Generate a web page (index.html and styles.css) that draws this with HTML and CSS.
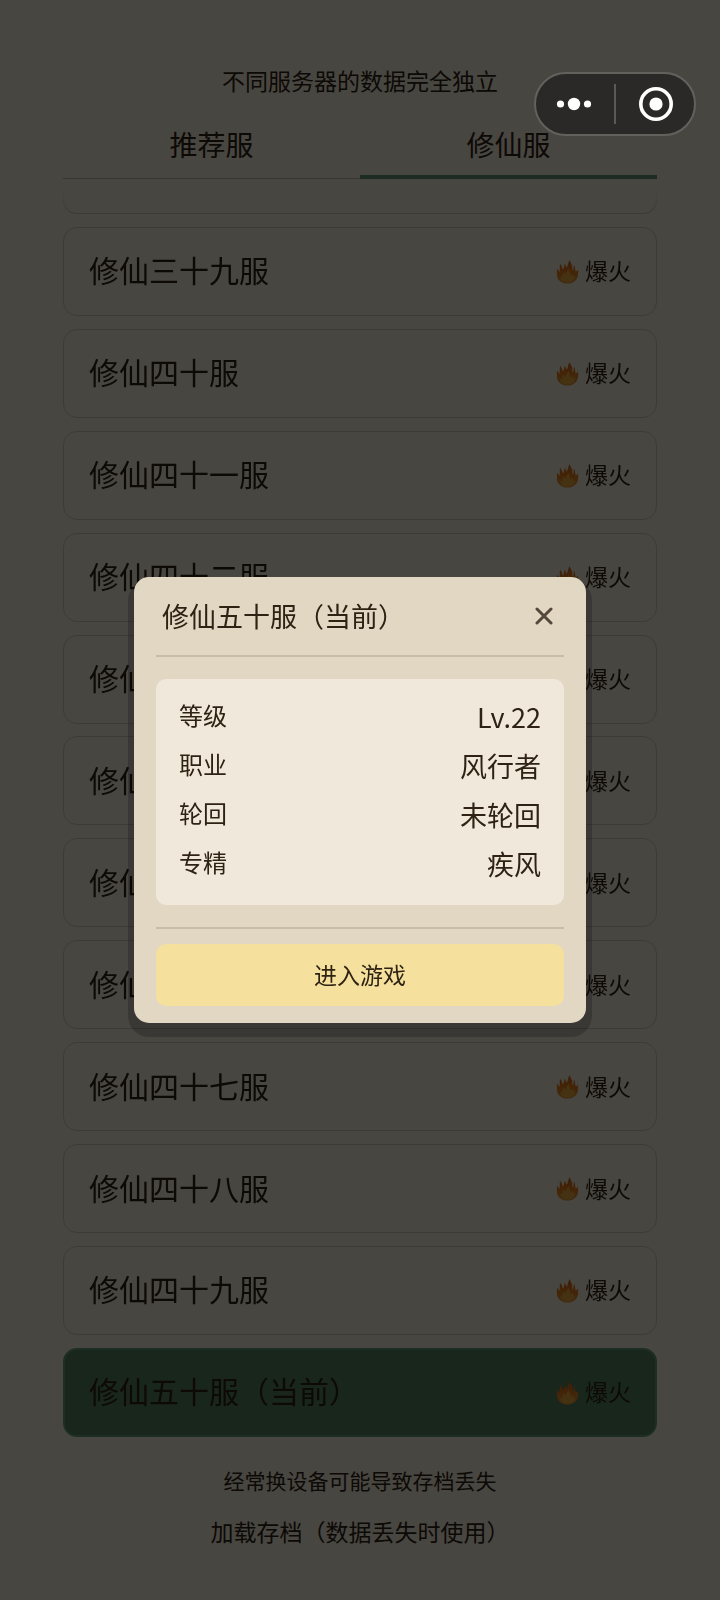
FILE: index.html
```
<!DOCTYPE html>
<html lang="zh-CN">
<head>
    <meta charset="UTF-8">
    <meta name="viewport" content="width=device-width, initial-scale=1.0">
    <title>修仙服</title>
    <link rel="stylesheet" href="styles.css">
</head>
<body>
    <svg width="0" height="0" class="defs" aria-hidden="true">
        <defs>
            <linearGradient id="flame" x1="0" y1="0" x2="0" y2="1">
                <stop offset="0" stop-color="#c8641a"/>
                <stop offset="0.5" stop-color="#e27a18"/>
                <stop offset="1" stop-color="#d8923c"/>
            </linearGradient>
            <symbol id="fire" viewBox="0 0 24 26">
                <path fill="url(#flame)" d="M12 25.500C5.500 25.500 1 21.500 1 16 1 14 1.200 12.500 .8 10.500 2.200 11.300 3 12.300 3.600 13.600 4.400 11.500 3.600 8 4.200 5 5.600 6.500 6.400 8.500 7 11 8.800 9.500 8.400 7 9.200 4.800 9.900 6.200 10.600 7.400 11 9 12.800 7.500 12.200 4 14.200 1 14.600 3.500 16.200 4.500 16.800 7 17.200 8.700 16.600 10.500 17.600 12 18.800 10.500 18 8 18.800 6 20 8 19.800 10.500 20.600 13 21.600 12.400 22.200 11.600 23.200 10.800 22.800 12.600 23.200 14 23 16 22.600 21.500 18.500 25.500 12 25.500Z"/>
                <path fill="#e6a83c" d="M12 24.500C7.500 24.500 4.400 22 4.200 18.400 5.400 19 6 19.200 6.800 19 6.200 17 7 15.200 8.200 13.600 8.600 15 9 15.800 10 16.400 10.600 13.800 11.800 12 13.400 10.400 13.400 13 15 14.600 15.200 17.400 16.400 17 16.800 16 17.200 15 18 16.200 18 17.600 18 18.800 18.800 18.600 19.400 18.200 20 17.600 20 21.800 16.600 24.500 12 24.500Z"/>
            </symbol>
        </defs>
    </svg>

    <main class="page">
        <p class="notice">不同服务器的数据完全独立</p>
        <nav class="tabs">
            <button class="tab">推荐服</button>
            <button class="tab active">修仙服</button>
        </nav>
        <ul class="servers">
            <li class="server partial"></li>
            <li><button class="server"><span>修仙三十九服</span><span class="status"><svg class="fire"><use href="#fire"/></svg>爆火</span></button></li>
            <li><button class="server"><span>修仙四十服</span><span class="status"><svg class="fire"><use href="#fire"/></svg>爆火</span></button></li>
            <li><button class="server"><span>修仙四十一服</span><span class="status"><svg class="fire"><use href="#fire"/></svg>爆火</span></button></li>
            <li><button class="server"><span>修仙四十二服</span><span class="status"><svg class="fire"><use href="#fire"/></svg>爆火</span></button></li>
            <li><button class="server"><span>修仙四十三服</span><span class="status"><svg class="fire"><use href="#fire"/></svg>爆火</span></button></li>
            <li><button class="server"><span>修仙四十四服</span><span class="status"><svg class="fire"><use href="#fire"/></svg>爆火</span></button></li>
            <li><button class="server"><span>修仙四十五服</span><span class="status"><svg class="fire"><use href="#fire"/></svg>爆火</span></button></li>
            <li><button class="server"><span>修仙四十六服</span><span class="status"><svg class="fire"><use href="#fire"/></svg>爆火</span></button></li>
            <li><button class="server"><span>修仙四十七服</span><span class="status"><svg class="fire"><use href="#fire"/></svg>爆火</span></button></li>
            <li><button class="server"><span>修仙四十八服</span><span class="status"><svg class="fire"><use href="#fire"/></svg>爆火</span></button></li>
            <li><button class="server"><span>修仙四十九服</span><span class="status"><svg class="fire"><use href="#fire"/></svg>爆火</span></button></li>
            <li><button class="server current"><span>修仙五十服（当前）</span><span class="status"><svg class="fire"><use href="#fire"/></svg>爆火</span></button></li>
        </ul>
        <footer class="footer">
            <p class="warning">经常换设备可能导致存档丢失</p>
            <a class="load" href="#">加载存档（数据丢失时使用）</a>
        </footer>
    </main>

    <div class="overlay">
        <section class="modal" role="dialog" aria-labelledby="modalTitle">
            <header class="modal-header">
                <h2 id="modalTitle">修仙五十服（当前）</h2>
                <button class="close" aria-label="关闭">
                    <svg width="18" height="18" viewBox="0 0 18 18"><path d="M2 2L16 16M16 2L2 16" stroke="currentColor" stroke-width="3" stroke-linecap="round"/></svg>
                </button>
            </header>
            <dl class="info">
                <div class="row"><dt>等级</dt><dd>Lv.22</dd></div>
                <div class="row"><dt>职业</dt><dd>风行者</dd></div>
                <div class="row"><dt>轮回</dt><dd>未轮回</dd></div>
                <div class="row"><dt>专精</dt><dd>疾风</dd></div>
            </dl>
            <div class="modal-footer">
                <button class="enter">进入游戏</button>
            </div>
        </section>
    </div>

    <!-- mini program capsule -->
    <div class="capsule">
        <button aria-label="更多">
            <svg width="36" height="14" viewBox="0 0 36 14" fill="#fff"><circle cx="4.500" cy="7" r="3.600"/><circle cx="18" cy="7" r="6.200"/><circle cx="31.500" cy="7" r="3.600"/></svg>
        </button>
        <button aria-label="关闭小程序">
            <svg width="34" height="34" viewBox="0 0 34 34"><circle cx="17" cy="17" r="15.200" fill="none" stroke="#fff" stroke-width="3.600"/><circle cx="17" cy="17" r="6.600" fill="#fff"/></svg>
        </button>
    </div>
</body>
</html>
```

FILE: styles.css
```
* {
    box-sizing: border-box;
}
body {
    margin: 0;
    background-color: #f0e9d8;
    color: #2e2214;
    font-family: "Noto Sans CJK SC", sans-serif;
}
button {
    margin: 0;
    padding: 0;
    border: none;
    background: none;
    color: inherit;
    font-family: inherit;
    cursor: pointer;
}
p, ul, dl, dd, h2 {
    margin: 0;
    padding: 0;
}
.defs {
    position: absolute;
}
.page {
    display: flex;
    flex-direction: column;
    min-height: 100vh;
    padding: 65px 63px 54px;
}
.notice {
    margin-bottom: 16px;
    font-size: 23px;
    line-height: 30px;
    text-align: center;
}
.tabs {
    display: flex;
    height: 68px;
    box-shadow: inset 0 -1px #bdb5a4;
}
.tab {
    flex: 1;
    padding-top: 2px;
    font-size: 28px;
    line-height: 62px;
    border-bottom: 4px solid transparent;
}
.tab.active {
    border-bottom-color: #5f9474;
}
.servers {
    flex: 1;
    display: flex;
    flex-direction: column;
    justify-content: space-between;
    margin-top: 13px;
    list-style: none;
    mask-image: linear-gradient(transparent, #000 20px);
}
.server {
    display: flex;
    align-items: center;
    justify-content: space-between;
    width: 100%;
    height: 89px;
    padding: 0 25px 4px 25px;
    border: 1px solid #cdc6b6;
    border-radius: 14px;
    font-size: 30px;
}
.server.partial {
    height: 22px;
    border-top: none;
    border-radius: 0 0 14px 14px;
}
.server.current {
    background-color: #567f5c;
    border: 2px solid #639a78;
    padding: 0 24px 4px 24px;
}
.status {
    display: flex;
    align-items: center;
    gap: 6px;
    padding-top: 2px;
    font-size: 23px;
}
.fire {
    width: 23px;
    height: 25px;
    margin-top: 2px;
}
.footer {
    display: flex;
    flex-direction: column;
    align-items: center;
    gap: 21px;
    padding-top: 28px;
    line-height: 30px;
}
.warning {
    font-size: 21px;
}
.load {
    color: inherit;
    font-size: 23px;
    text-decoration: none;
}
.overlay {
    position: fixed;
    inset: 0;
    display: flex;
    align-items: center;
    padding: 0 134px;
    background-color: rgba(0, 0, 0, 0.7);
}
.modal {
    flex: 1;
    padding: 0 22px 17px;
    background-color: #e1d7c3;
    border-radius: 15px;
    box-shadow: 0 8px 0 6px rgba(0, 0, 0, 0.2);
}
.modal-header {
    display: flex;
    align-items: center;
    justify-content: space-between;
    height: 80px;
    padding: 0 11px 2px 6px;
    border-bottom: 2px solid #c9bda8;
}
h2 {
    font-size: 27px;
    font-weight: normal;
}
.close {
    display: flex;
    padding-top: 2px;
    color: #55483a;
}
.info {
    margin: 22px 0;
    padding: 13px 23px 17px;
    background-color: #f0e9db;
    border-radius: 10px;
}
.row {
    display: flex;
    justify-content: space-between;
    line-height: 49px;
}
dt {
    font-size: 24px;
    line-height: 46px;
}
dd {
    font-size: 27px;
}
.modal-footer {
    padding-top: 15px;
    border-top: 2px solid #c9bda8;
}
.enter {
    width: 100%;
    height: 62px;
    padding-bottom: 2px;
    background-color: #f5e09d;
    border-radius: 10px;
    font-size: 23px;
}
.capsule {
    position: fixed;
    top: 72px;
    right: 24px;
    display: flex;
    align-items: center;
    width: 162px;
    height: 64px;
    background-color: #2b2927;
    border: 2px solid #62615c;
    border-radius: 32px;
}
.capsule button {
    flex: 1;
    display: flex;
    align-items: center;
    justify-content: center;
    height: 40px;
    padding-right: 2px;
}
.capsule button + button {
    padding: 0 0 0 2px;
    border-left: 2px solid #5b5a57;
}
```
